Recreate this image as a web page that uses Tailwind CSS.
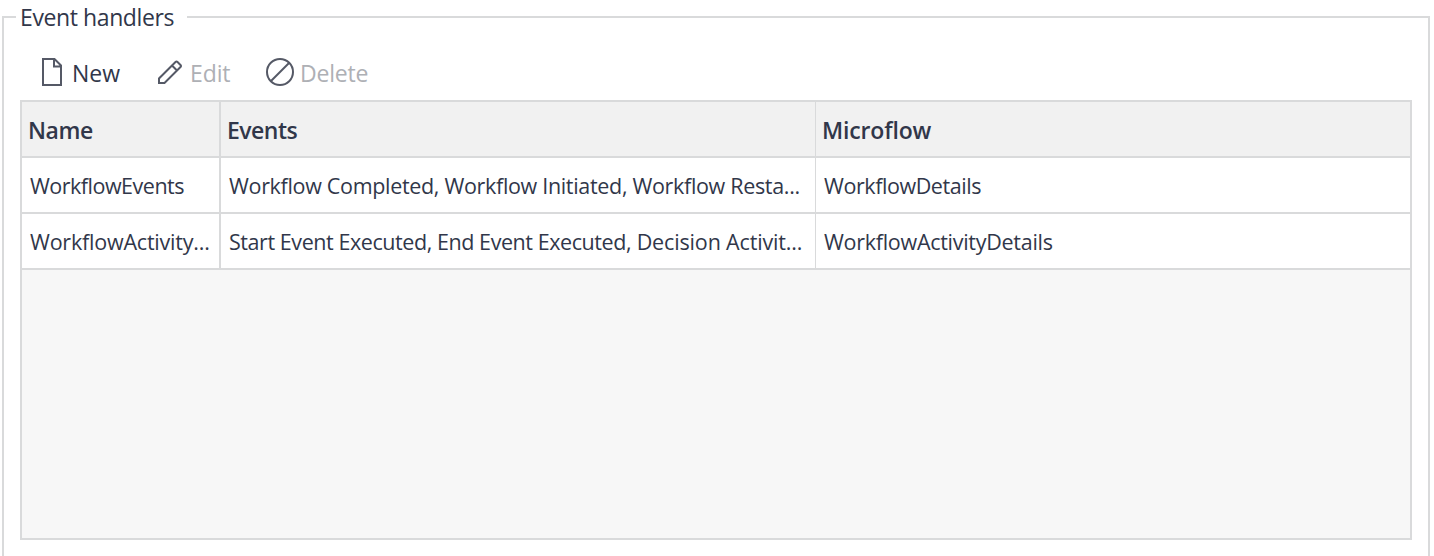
<!DOCTYPE html>
<html lang="en">
<head>
<meta charset="utf-8">
<title>Event handlers</title>
<script src="https://cdn.jsdelivr.net/npm/@tailwindcss/browser@4"></script>
</head>
<body class="h-[556px] overflow-hidden bg-white font-['Open_Sans','Noto_Sans',sans-serif] text-[#31374a]">
<fieldset class="ml-[2px] h-[580px] w-[1428px] border-2 border-[#d9dadb] px-3">
  <legend class="h-[34px] w-[171px] pl-1 text-[23px] leading-[35px] tracking-[-0.4px] whitespace-nowrap">Event handlers</legend>
  <div class="flex h-[66px] items-center pt-[11px] pl-6 text-[23px] leading-8 whitespace-nowrap">
    <button class="flex w-[116px] items-center">
      <svg class="mr-2 mb-0.5 h-7 w-6 shrink-0" viewBox="0 0 24 28" fill="none" stroke="#555966" stroke-width="2"><path d="M3 1H14.500L21 7.500V27H3ZM14 1V8.500H21"/></svg>
      <span>New</span>
    </button>
    <button class="flex w-[110px] items-center text-[#aeb0b5]">
      <svg class="mr-1.5 mb-0.5 h-7 w-7 shrink-0" viewBox="0 0 28 28" fill="none" stroke="#555966" stroke-width="2"><path d="M3 25V20.500L19.500 4Q20.500 3 21.500 4L24.500 7Q25.500 8 24.500 9L8.500 25ZM16 7.500L21 12.500"/></svg>
      <span class="tracking-[-0.1px]">Edit</span>
    </button>
    <button class="flex items-center text-[#aeb0b5]">
      <svg class="mr-1.5 mb-0.5 h-7 w-7 shrink-0" viewBox="0 0 28 28" fill="none" stroke="#555966" stroke-width="2"><circle cx="14" cy="14" r="13"/><path d="M23 5L5 23"/></svg>
      <span class="tracking-[-0.2px]">Delete</span>
    </button>
  </div>
  <div class="ml-1 h-[440px] w-[1392px] border-2 border-[#d9dadb] bg-[#f7f7f7] whitespace-nowrap">
    <div class="grid h-14 grid-cols-[199px_595px_594px] border-b-2 border-[#d9dadb] bg-[#f1f1f1] text-[23px] leading-[56px] font-semibold">
      <div class="border-r-2 border-[#d9dadb] pl-1.5 tracking-[-0.4px]">Name</div>
      <div class="border-r border-[#d9dadb] pl-1.5 tracking-[-0.5px]">Events</div>
      <div class="pl-1.5 tracking-[-0.15px]">Microflow</div>
    </div>
    <div class="grid h-14 grid-cols-[199px_595px_594px] grid-rows-[54px] border-b-2 border-[#d9dadb] bg-white text-[21.5px] leading-[56px]">
      <div class="border-r-2 border-[#d9dadb] pl-2 tracking-[-0.5px]">WorkflowEvents</div>
      <div class="border-r border-[#d9dadb] pl-2 tracking-[-0.32px]">Workflow Completed, Workflow Initiated, Workflow Resta...</div>
      <div class="pl-2 tracking-[-0.43px]">WorkflowDetails</div>
    </div>
    <div class="grid h-14 grid-cols-[199px_595px_594px] grid-rows-[54px] border-b-2 border-[#d9dadb] bg-white text-[21.5px] leading-[56px]">
      <div class="border-r-2 border-[#d9dadb] pl-2 tracking-[-0.21px]">WorkflowActivity...</div>
      <div class="border-r border-[#d9dadb] pl-2"><span class="tracking-[-0.43px]">Start Event Executed, End Event Executed,</span> <span class="tracking-[-0.15px]">Decision Activit...</span></div>
      <div class="pl-2 tracking-[-0.28px]">WorkflowActivityDetails</div>
    </div>
  </div>
</fieldset>
</body>
</html>
